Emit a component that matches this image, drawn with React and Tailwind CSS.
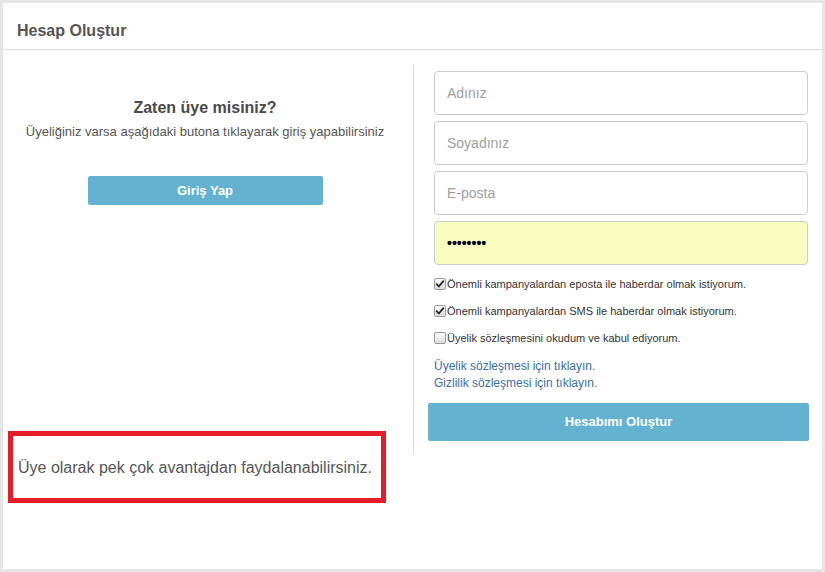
import React from "react";

function Check({ checked }) {
    return (
        <span className="w-[12px] h-[12px] shrink-0 rounded-[2px] border border-[#9a9a9a] bg-gradient-to-b from-[#fdfdfd] to-[#dcdcdc] flex items-center justify-center">
            {checked && (
                <svg viewBox="0 0 12 12" className="w-[10px] h-[10px]">
                    <path d="M2 6.2 L4.6 9 L10 2.6" fill="none" stroke="#222" strokeWidth="2.2" strokeLinecap="round" strokeLinejoin="round" />
                </svg>
            )}
        </span>
    );
}

function Field({ placeholder, value, autofill }) {
    return (
        <div
            className={`h-[44px] ml-[6px] mr-[1px] rounded-[4px] border border-[#cccccc] flex items-center px-[12px] text-[14px] ${autofill ? "bg-[#fafdc0]" : "bg-white"}`}
        >
            {value ? (
                <span className="text-black text-[14px] font-bold">{value}</span>
            ) : (
                <span className="text-[#a0a0a0]">{placeholder}</span>
            )}
        </div>
    );
}

export default function App() {
    return (
        <div className="w-[825px] h-[572px] bg-[#e6e6e6] p-[3px] font-['Liberation_Sans',Arial,sans-serif]">
            <div className="h-full w-[819px] bg-white">
                {/* Header */}
                <div className="h-[47px] border-b border-[#dcdcdc] flex items-center pl-[14px] pt-[10px]">
                    <h1 className="text-[16px] font-bold text-[#555]">Hesap Oluştur</h1>
                </div>

                {/* Body */}
                <div className="flex pt-[15px]">
                    <div className="w-[411px] h-[389px] border-r border-[#dcdcdc] pr-[6px] flex flex-col items-center pt-[33px]">
                        <h2 className="text-[16px] font-bold text-[#4a4a4a] leading-[20px]">Zaten üye misiniz?</h2>
                        <p className="mt-[5px] text-[13px] text-[#555] leading-[18px]">
                            Üyeliğiniz varsa aşağıdaki butona tıklayarak giriş yapabilirsiniz
                        </p>
                        <button className="mt-[35px] w-[235px] h-[29px] rounded-[2px] bg-[#63b2d1] text-white text-[13px] font-bold">
                            Giriş Yap
                        </button>
                    </div>

                    <div className="flex-1 pl-[14px] pr-[13px] pt-[6px]">
                        <div className="flex flex-col gap-[6px]">
                            <Field placeholder="Adınız" />
                            <Field placeholder="Soyadınız" />
                            <Field placeholder="E-posta" />
                            <Field value="••••••••" autofill />
                        </div>

                        <div className="ml-[6px] mt-[11px] flex flex-col gap-[11px] text-[11px] text-[#333]">
                            <label className="flex items-center gap-[1px] h-[16px]">
                                <Check checked />
                                <span>Önemli kampanyalardan eposta ile haberdar olmak istiyorum.</span>
                            </label>
                            <label className="flex items-center gap-[1px] h-[16px]">
                                <Check checked />
                                <span>Önemli kampanyalardan SMS ile haberdar olmak istiyorum.</span>
                            </label>
                            <label className="flex items-center gap-[1px] h-[16px]">
                                <Check />
                                <span>Üyelik sözleşmesini okudum ve kabul ediyorum.</span>
                            </label>
                        </div>

                        <div className="ml-[6px] mt-[12px] flex flex-col text-[12px] leading-[17px] text-[#3a6fa5]">
                            <a href="#">Üyelik sözleşmesi için tıklayın.</a>
                            <a href="#">Gizlilik sözleşmesi için tıklayın.</a>
                        </div>

                        <button className="mt-[11px] w-[381px] h-[38px] rounded-[2px] bg-[#63b2d1] text-white text-[13px] font-bold">
                            Hesabımı Oluştur
                        </button>
                    </div>
                </div>

                {/* Note */}
                <div className="-mt-[23px] ml-[5px] w-[378px] h-[72px] border-[5px] border-[#e31e26] flex items-center pl-[5px] pt-[2px]">
                    <p className="text-[16px] text-[#555] whitespace-nowrap">Üye olarak pek çok avantajdan faydalanabilirsiniz.</p>
                </div>
            </div>
        </div>
    );
}
